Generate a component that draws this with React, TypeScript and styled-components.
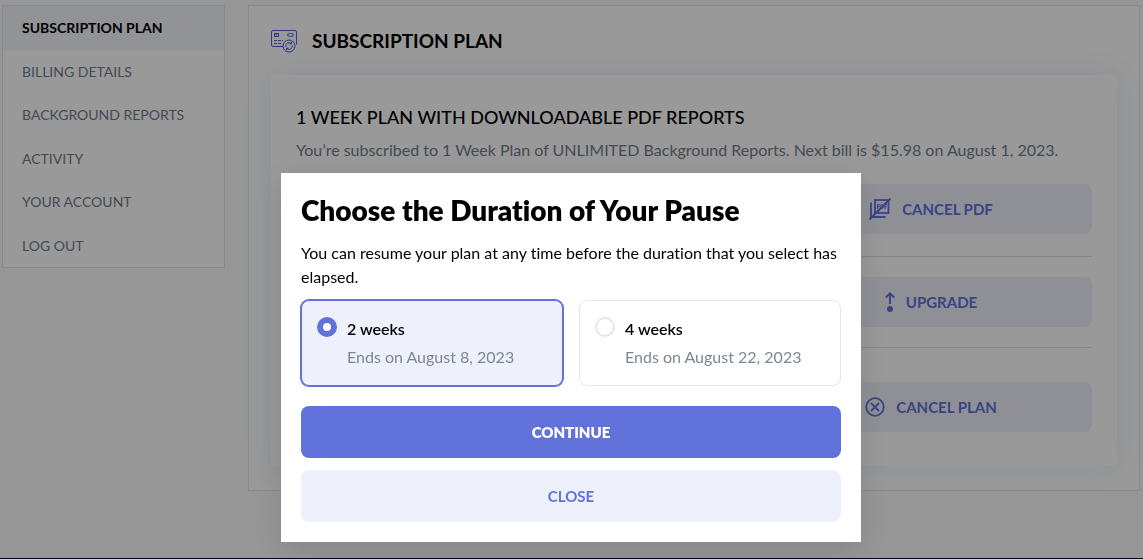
import React, { useState } from "react";
import styled, { createGlobalStyle } from "styled-components";

const GlobalStyle = createGlobalStyle`
  *, *::before, *::after { box-sizing: border-box; }
  body {
    margin: 0;
    background: #fafafa;
    color: #000;
    font-family: Lato, "Liberation Sans", sans-serif;
    font-size: 16px;
    font-variant-ligatures: none;
  }
  h1, h2, h3, p, ul { margin: 0; padding: 0; }
  button { font-family: inherit; cursor: pointer; }
`;

const Page = styled.div`
  display: flex;
  flex-direction: column;
  min-height: 100vh;
`;

const Columns = styled.div`
  display: flex;
  align-items: flex-start;
  gap: 23px;
  padding: 5px 3px 24px 2px;
`;

const SideNav = styled.nav`
  flex: 0 0 223px;
  background: #fff;
  border: 1px solid #e1e6ed;
`;

const NavList = styled.ul`
  list-style: none;
`;

const NavLink = styled.a<{ $active?: boolean }>`
  display: block;
  padding: 13px 19px;
  font-size: 14px;
  line-height: 1.25;
  text-decoration: none;
  color: ${(p) => (p.$active ? "#000" : "#6f7d8c")};
  font-weight: ${(p) => (p.$active ? 700 : 400)};
  background: ${(p) => (p.$active ? "#f3f6fa" : "transparent")};
`;

const Panel = styled.main`
  flex: 1;
  min-width: 0;
  padding: 20px 22px 24px;
  background: #fff;
  border: 1px solid #e1e6ed;
`;

const PanelHeader = styled.header`
  display: flex;
  align-items: center;
  gap: 15px;
  height: 30px;
  margin-bottom: 19px;
`;

const PanelTitle = styled.h1`
  font-size: 19px;
  line-height: 24px;
  font-weight: 700;
`;

const Card = styled.section`
  padding: 30px 25px 34px;
  background: #fff;
  box-shadow: 0 0 30px #e9eef8;
`;

const PlanTitle = styled.h2`
  font-size: 18px;
  line-height: 24px;
  font-weight: 500;
`;

const PlanText = styled.p`
  margin-top: 9px;
  margin-bottom: 22px;
  line-height: 24px;
  color: #6f7d8c;
`;

const ActionRow = styled.div<{ $before?: number; $after?: number }>`
  display: flex;
  justify-content: flex-end;
  padding-top: ${(p) => p.$before ?? 0}px;
  padding-bottom: ${(p) => p.$after ?? 0}px;
`;

const Divider = styled.hr`
  margin: 20px 0;
  border: 0;
  border-top: 1px solid #dcdde2;
`;

const ActionButton = styled.button`
  display: flex;
  align-items: center;
  justify-content: center;
  gap: 11px;
  width: 322px;
  height: 50px;
  border: 0;
  border-radius: 8px;
  background: #eef1fb;
  color: #6272db;
  font-size: 15px;
  font-weight: 700;
`;

const Footer = styled.footer`
  margin-top: auto;
  border-top: 1px solid #000033;
`;

const Overlay = styled.div`
  position: fixed;
  inset: 0;
  display: flex;
  justify-content: center;
  align-items: flex-start;
  padding: 173px 21px 16px 20px;
  background: rgba(0, 0, 0, 0.4);
`;

const Dialog = styled.form`
  width: 100%;
  max-width: 580px;
  padding: 20px;
  background: #fff;
  box-shadow: 0 8px 32px rgba(0, 0, 0, 0.12);
`;

const DialogTitle = styled.h2`
  font-size: 28px;
  line-height: 34px;
  font-weight: 800;
`;

const DialogText = styled.p`
  margin-top: 14px;
  line-height: 24px;
`;

const Options = styled.div`
  display: grid;
  grid-template-columns: 1fr 1fr;
  gap: 16px;
  margin: 11px 0 20px;
`;

const Option = styled.label<{ $selected: boolean }>`
  display: flex;
  align-items: flex-start;
  gap: 10px;
  padding: 14px 15px;
  border: 1px solid ${(p) => (p.$selected ? "#6272db" : "#e6e6ea")};
  border-radius: 8px;
  background: ${(p) => (p.$selected ? "#eef1fb" : "#fff")};
  box-shadow: ${(p) => (p.$selected ? "0 0 0 1px #6272db" : "none")};
  cursor: pointer;
`;

const Radio = styled.input`
  appearance: none;
  flex: none;
  width: 20px;
  height: 20px;
  margin: 2px 0 0;
  border: 2px solid #e6e6ea;
  border-radius: 50%;
  background: #fff;

  &:checked {
    border: 6px solid #6272db;
  }
`;

const OptionBody = styled.span`
  display: flex;
  flex-direction: column;
  line-height: 28px;
`;

const OptionName = styled.span`
  font-weight: 600;
`;

const OptionNote = styled.span`
  color: #7b8794;
`;

const DialogButton = styled.button<{ $primary?: boolean }>`
  display: block;
  width: 100%;
  height: 52px;
  border: 0;
  border-radius: 8px;
  background: ${(p) => (p.$primary ? "#6272db" : "#eef1fb")};
  color: ${(p) => (p.$primary ? "#fff" : "#6272db")};
  font-size: 15px;
  font-weight: ${(p) => (p.$primary ? 800 : 700)};

  & + & {
    margin-top: 12px;
  }
`;

const SubscriptionIcon = () => (
  <svg width="26" height="23" viewBox="0 0 26 23" fill="none" stroke="#5262d4" aria-hidden="true">
    <path d="M12 16.5H2A1.5 1.5 0 0 1 .5 15V2A1.5 1.5 0 0 1 2 .5h22A1.5 1.5 0 0 1 25.500 2v12.500" />
    <rect x="3.500" y="3.500" width="4" height="3" />
    <path d="M5.500 3.500v2" />
    <ellipse cx="19.500" cy="5" rx="3" ry="1.500" />
    <path d="M3 10.500h9M3 13.500h8" strokeDasharray="3 1" />
    <circle cx="18" cy="16" r="6" />
    <path d="M14.700 16.500a3.300 3.300 0 0 1 5.600-2.900M21.300 15.500a3.300 3.300 0 0 1-5.600 2.900M20.500 11.800v2h-2M15.500 20.200v-2h2" />
  </svg>
);

const CancelPdfIcon = () => (
  <svg width="22" height="22" viewBox="0 0 22 22" fill="none" stroke="currentColor" aria-hidden="true">
    <rect x="6" y="2" width="13.500" height="13" strokeWidth="1.800" />
    <path d="M2 4.500v14.500H16.500" strokeWidth="1.800" />
    <path
      d="M8.500 11V6.500h1.500a1 1 0 0 1 0 2.200H8.500M12 6.500v4h.7a1.500 1.500 0 0 0 1.500-1.500V8a1.500 1.500 0 0 0-1.500-1.500zM16 11V6.500h2M16 8.700h1.700"
      strokeWidth="1"
    />
    <path d="M.5 21.500l21-21" strokeWidth="2" />
  </svg>
);

const UpgradeIcon = () => (
  <svg width="10" height="20" viewBox="0 0 10 20" fill="none" stroke="currentColor" strokeWidth="2" aria-hidden="true">
    <path d="M5 12V1.500M.8 5.500L5 1.400l4.200 4.100" />
    <circle cx="5" cy="17" r="3" fill="currentColor" stroke="none" />
  </svg>
);

const CancelPlanIcon = () => (
  <svg width="20" height="20" viewBox="0 0 20 20" fill="none" stroke="currentColor" strokeWidth="1.800" aria-hidden="true">
    <circle cx="10" cy="10" r="8.800" />
    <path d="M6 6l8 8M14 6l-8 8" />
  </svg>
);

const navItems = [
  "SUBSCRIPTION PLAN",
  "BILLING DETAILS",
  "BACKGROUND REPORTS",
  "ACTIVITY",
  "YOUR ACCOUNT",
  "LOG OUT",
];

const durations = [
  { id: "2w", name: "2 weeks", note: "Ends on August 8, 2023" },
  { id: "4w", name: "4 weeks", note: "Ends on August 22, 2023" },
];

export default function App() {
  const [duration, setDuration] = useState("2w");

  return (
    <>
      <GlobalStyle />
      <Page>
        <Columns>
          <SideNav aria-label="Account">
            <NavList>
              {navItems.map((item, i) => (
                <li key={item}>
                  <NavLink href="#" $active={i === 0}>
                    {item}
                  </NavLink>
                </li>
              ))}
            </NavList>
          </SideNav>
          <Panel>
            <PanelHeader>
              <SubscriptionIcon />
              <PanelTitle>SUBSCRIPTION PLAN</PanelTitle>
            </PanelHeader>
            <Card>
              <PlanTitle>1 WEEK PLAN WITH DOWNLOADABLE PDF REPORTS</PlanTitle>
              <PlanText>
                You’re subscribed to 1 Week Plan of UNLIMITED Background Reports. Next bill is $15.98 on August 1, 2023.
              </PlanText>
              <ActionRow $after={2}>
                <ActionButton type="button">
                  <CancelPdfIcon />
                  CANCEL PDF
                </ActionButton>
              </ActionRow>
              <Divider />
              <ActionRow>
                <ActionButton type="button">
                  <UpgradeIcon />
                  UPGRADE
                </ActionButton>
              </ActionRow>
              <Divider />
              <ActionRow $before={14}>
                <ActionButton type="button">
                  <CancelPlanIcon />
                  CANCEL PLAN
                </ActionButton>
              </ActionRow>
            </Card>
          </Panel>
        </Columns>
        <Footer />
      </Page>
      <Overlay>
        <Dialog role="dialog" aria-modal="true" aria-labelledby="pause-title" onSubmit={(e) => e.preventDefault()}>
          <DialogTitle id="pause-title">Choose the Duration of Your Pause</DialogTitle>
          <DialogText>
            You can resume your plan at any time before the duration that you select has elapsed.
          </DialogText>
          <Options>
            {durations.map((d) => (
              <Option key={d.id} $selected={duration === d.id}>
                <Radio
                  type="radio"
                  name="duration"
                  value={d.id}
                  checked={duration === d.id}
                  onChange={() => setDuration(d.id)}
                />
                <OptionBody>
                  <OptionName>{d.name}</OptionName>
                  <OptionNote>{d.note}</OptionNote>
                </OptionBody>
              </Option>
            ))}
          </Options>
          <DialogButton type="submit" $primary>
            CONTINUE
          </DialogButton>
          <DialogButton type="button">CLOSE</DialogButton>
        </Dialog>
      </Overlay>
    </>
  );
}
